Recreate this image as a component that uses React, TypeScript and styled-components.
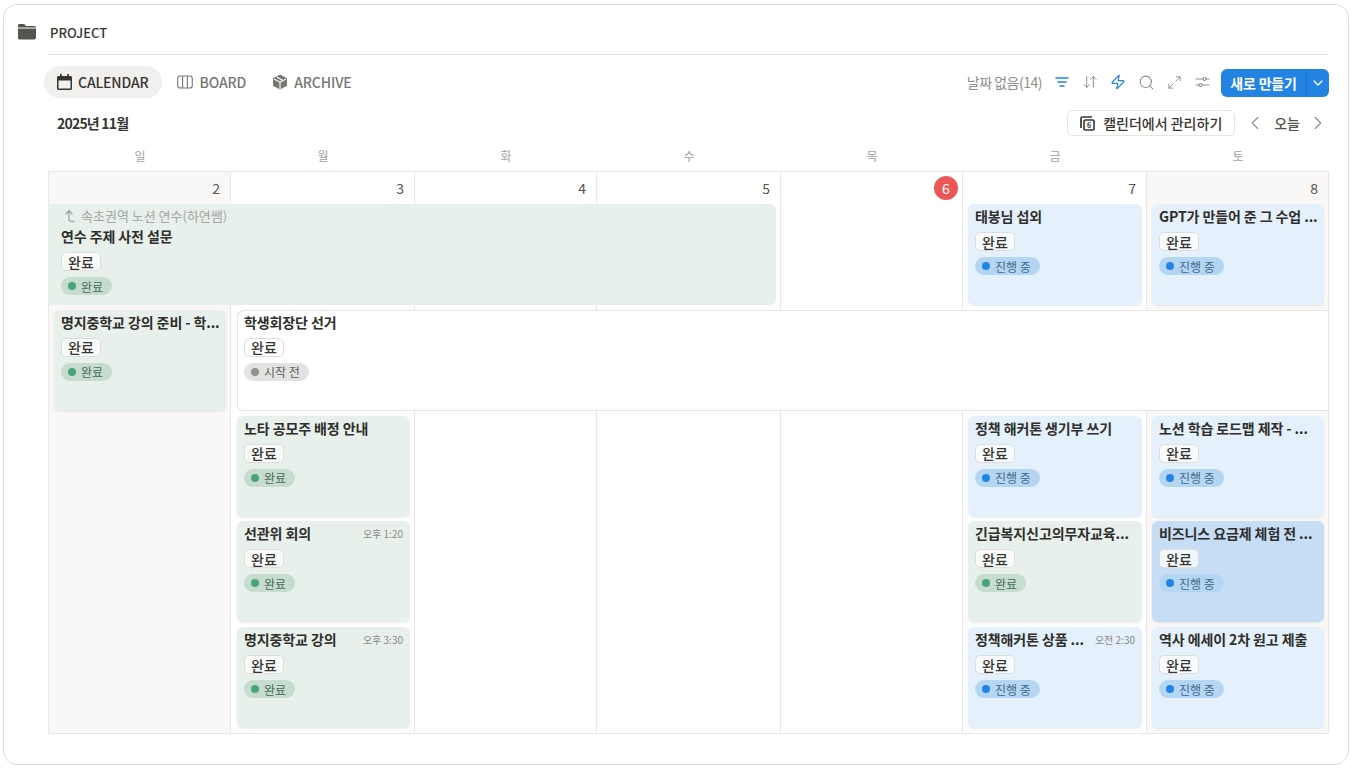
import React from "react";
import styled, { createGlobalStyle } from "styled-components";
import { Search, ChevronDown, ChevronLeft, ChevronRight, ArrowDownUp, Zap, Maximize2 } from "lucide-react";

const Global = createGlobalStyle`
  html, body { margin: 0; padding: 0; background: #fff; }
  body { font-family: "Noto Sans CJK KR", "Noto Sans", sans-serif; color: #37352f; width: 1352px; height: 768px; overflow: hidden; }
  * { box-sizing: border-box; }
`;
const Page = styled.div`
  width: 1352px; height: 768px; padding: 4px 3px 3px 3px;
`;
const Frame = styled.div`
  height: 761px; border: 1px solid #dcdcdc; border-radius: 14px; padding: 14px 19px 0 14px;
  display: flex; flex-direction: column;
`;
const TitleRow = styled.div`display:flex; align-items:center; height: 28px; padding-bottom:2px; margin-bottom: 7px;`;
const FolderBox = styled.div`width:32px; display:flex; align-items:center;`;
const Title = styled.div`font-size:13px; font-weight:500; color:#37352f;`;
const Body = styled.div`margin-left:30px; flex:1; display:flex; flex-direction:column;`;
const Rule = styled.div`height:1px; background:#e4e3e1;`;
const Toolbar = styled.div`display:flex; align-items:center; justify-content:space-between; margin:11px 0 0 -4px; height:32px;`;
const Tabs = styled.div`display:flex; align-items:center; gap:2px;`;
const Tab = styled.div<{ $active?: boolean; $gap: number }>`
  height:32px; border-radius:16px; padding:${p => p.$active ? "0 13px" : "0 11px 0 13px"}; display:flex; align-items:center; gap:${p => p.$gap}px;
  font-size:14px; font-weight:500; letter-spacing:-.15px;
  background:${p => p.$active ? "#f1f0ee" : "transparent"};
  color:${p => p.$active ? "#37352f" : "#787774"};
`;
const Tools = styled.div`display:flex; align-items:center;`;
const NoDate = styled.span`font-size:14px; color:#8f8d89; margin-right:6px; letter-spacing:-.5px;`;
const ToolIcon = styled.span<{ $c?: string }>`
  width:28px; height:24px; display:flex; align-items:center; justify-content:center; color:${p => p.$c || "#91908c"};
`;
const NewBtn = styled.div`
  margin-left:5px; margin-top:2px; height:28px; width:108px; border-radius:6px; background:#2383e2; color:#fff; display:flex; align-items:center;
  font-size:14px; font-weight:600;
`;
const NewLabel = styled.span`flex:1; text-align:center; letter-spacing:-.2px;`;
const NewCaret = styled.span`width:23px; height:100%; border-left:1px solid #1b73cb; padding-right:1px; display:flex; align-items:center; justify-content:center;`;
const MonthRow = styled.div`display:flex; align-items:center; justify-content:space-between; height:26px; margin-top:12px;`;
const Month = styled.div`font-size:14px; font-weight:600; margin-left:9px; letter-spacing:-.8px;`;
const MonthRight = styled.div`display:flex; align-items:center;`;
const ManageBtn = styled.div`
  height:26px; width:168px; border:1px solid #e6e5e3; border-radius:6px; display:flex; align-items:center; justify-content:center; gap:8px;
  font-size:14px; font-weight:500;
`;
const NavLeft = styled.span`display:flex; align-items:center; color:#8f8e8a; margin-left:9px;`;
const NavRight = styled.span`display:flex; align-items:center; color:#8f8e8a;`;
const Today = styled.span`font-size:14px; color:#55534e; margin:0 7px 0 8px; font-weight:500;`;
const Weekdays = styled.div`
  display:grid; grid-template-columns:182px 184px 182px 184px 182px 184px 182px; height:31px; align-items:center; margin-top:4px; padding-left:1px;
`;
const Weekday = styled.div`font-size:12px; color:#a4a3a0; text-align:center;`;
const Grid = styled.div`
  display:grid; grid-template-columns:182px 184px 182px 184px 182px 184px 182px;
  grid-template-rows:32px repeat(5, 105.75px); width:1281px;
  border-top:1px solid #e9e8e6; border-bottom:1px solid #e9e8e6; border-left:1px solid #e9e8e6;
`;
const Cell = styled.div<{ $col: number; $weekend?: boolean }>`
  grid-column:${p => p.$col}; grid-row:1 / -1;
  background:${p => p.$weekend ? "#f9f8f7" : "#fff"};
  border-right:1px solid #e9e8e6;
`;
const DayNum = styled.div<{ $col: number }>`
  grid-column:${p => p.$col}; grid-row:1; font-size:14px; color:#55534e; display:flex; justify-content:flex-end; align-items:center; padding-right:11px; z-index:1;
`;
const TodayDot = styled.span`
  display:inline-flex; width:24px; height:24px; border-radius:50%; background:#eb5757; color:#fff; align-items:center; justify-content:center;
  font-size:14px; margin-right:-6px;
`;
const Card = styled.div<{ $bg: string; $kind?: "open" | "cont"; $c: number; $e?: number; $r: number }>`
  grid-column:${p => p.$c} / span ${p => p.$e || 1}; grid-row:${p => p.$r};
  margin:${p => p.$kind === "open" ? "0 5px 4.75px -1px" : p.$kind === "cont" ? "0 1px 4.75px 6px" : p.$c === 2 ? "0 5px 4.75px 6px" : "0 5px 4.75px 5px"};
  background:${p => p.$bg};
  border-radius:${p => p.$kind === "open" ? "0 6px 6px 0" : p.$kind === "cont" ? "6px 0 0 6px" : "6px"};
  box-shadow:${p => p.$kind === "open" ? "none" : p.$kind === "cont" ? "inset 1px 1px 0 #e6e5e3, inset 0 -1px 0 #e6e5e3" : "0 1px 2px rgba(15,15,15,.08)"};
  padding:4.5px 7px 0 ${p => p.$kind === "open" ? 13 : 7}px; min-width:0; z-index:2; position:relative;
`;
const Linked = styled.div`display:flex; align-items:center; gap:4px; font-size:13px; color:#a3a7a3; height:15px; margin:-.5px 0 5.5px 3px;`;
const CardTitleRow = styled.div`display:flex; align-items:center; height:17px; padding-bottom:2px; gap:8px;`;
const CardTitle = styled.div`font-size:14px; font-weight:600; color:#2f2e2b; white-space:nowrap; flex:1; min-width:0; letter-spacing:-.1px;`;
const Time = styled.div`font-size:10px; color:#8b8a86; white-space:nowrap;`;
const Tag = styled.div`
  display:flex; width:fit-content; height:19px; margin-top:6.5px; padding:0 6px; align-items:center; background:rgba(255,255,255,.75); border:1px solid #dedddb; border-radius:5px; font-size:14px; font-weight:500; color:#37352f;
`;
const Pill = styled.div<{ $bg: string; $c: string }>`
  display:flex; width:fit-content; height:18px; margin-top:6px; border-radius:9px; align-items:center; gap:5px; padding:0 9px 0 7px; background:${p => p.$bg}; font-size:12px; color:${p => p.$c};
`;
const Dot = styled.span<{ $c: string }>`width:8px; height:8px; border-radius:50%; background:${p => p.$c};`;

const green = "#e8f0eb", blue = "#e4f0fb", blueDark = "#c6ddf5";
const S = {
  done: { bg: "#c5dccf", dot: "#4aa478", c: "#45695a", label: "완료" },
  prog: { bg: "#b5d6f3", dot: "#2383e2", c: "#3f6a8c", label: "진행 중" },
  todo: { bg: "#e3e2e0", dot: "#91918e", c: "#5f5e5b", label: "시작 전" },
};
type Ev = { t: string; s: keyof typeof S; c: number; r: number; e?: number; bg: string; time?: string; kind?: "open" | "cont"; linked?: string };
const events: Ev[] = [
  { t: "연수 주제 사전 설문", s: "done", c: 1, e: 4, r: 2, bg: green, kind: "open", linked: "속초권역 노션 연수(하연쌤)" },
  { t: "태봉님 섭외", s: "prog", c: 6, r: 2, bg: blue },
  { t: "GPT가 만들어 준 그 수업 ...", s: "prog", c: 7, r: 2, bg: blue },
  { t: "명지중학교 강의 준비 - 학...", s: "done", c: 1, r: 3, bg: green },
  { t: "학생회장단 선거", s: "todo", c: 2, e: 6, r: 3, bg: "#fff", kind: "cont" },
  { t: "노타 공모주 배정 안내", s: "done", c: 2, r: 4, bg: green },
  { t: "정책 해커톤 생기부 쓰기", s: "prog", c: 6, r: 4, bg: blue },
  { t: "노션 학습 로드맵 제작 - ...", s: "prog", c: 7, r: 4, bg: blue },
  { t: "선관위 회의", s: "done", c: 2, r: 5, bg: green, time: "오후 1:20" },
  { t: "긴급복지신고의무자교육...", s: "done", c: 6, r: 5, bg: green },
  { t: "비즈니스 요금제 체험 전 ...", s: "prog", c: 7, r: 5, bg: blueDark },
  { t: "명지중학교 강의", s: "done", c: 2, r: 6, bg: green, time: "오후 3:30" },
  { t: "정책해커톤 상품 ...", s: "prog", c: 6, r: 6, bg: blue, time: "오전 2:30" },
  { t: "역사 에세이 2차 원고 제출", s: "prog", c: 7, r: 6, bg: blue },
];

const FolderIcon = () => (
  <svg width="18" height="16" viewBox="0 0 18 16" fill="#55534e">
    <path d="M0 1.3C0 .6.6 0 1.3 0h4.3c.5 0 .9.2 1.2.6L8 2h8.7c.7 0 1.3.6 1.3 1.4H0z" />
    <path d="M0 4.6h18v9.2c0 1-.8 1.8-1.8 1.8H1.8C.8 15.6 0 14.8 0 13.8z" />
  </svg>
);
const CalIcon = () => (
  <svg width="15" height="16" viewBox="0 0 15 16" fill="#37352f">
    <path fillRule="evenodd" d="M3 0h1.7v2h5.6V0H12v2h1.5c.8 0 1.5.7 1.5 1.5v11c0 .8-.7 1.5-1.5 1.5h-12C.7 16 0 15.3 0 14.5v-11C0 2.7.7 2 1.5 2H3zM1.5 6.5v8h12v-8z" />
  </svg>
);
const BoardIcon = () => (
  <svg width="16" height="14" viewBox="0 0 16 14" fill="none" stroke="#787774" strokeWidth="1.1">
    <rect x=".7" y="1" width="14.6" height="12" rx="2.6" />
    <path d="M5.6 1v12M10.4 1v12" />
  </svg>
);
const CubeIcon = () => (
  <svg width="16" height="16" viewBox="0 0 16 16">
    <path d="M8 .5l7 3.7v7.6l-7 3.7-7-3.7V4.2z" fill="#787774" />
    <path d="M2 5l6 3.2L14 5M8 8.2V15M4.7 3l6.3 3.4" fill="none" stroke="#fff" strokeWidth="1.1" />
  </svg>
);
const FilterIcon = () => (
  <svg width="14" height="14" viewBox="0 0 14 14" fill="none" stroke="#2383e2" strokeWidth="1.5" strokeLinecap="round">
    <path d="M1 3h12M3 7h8M5 11h4" />
  </svg>
);
const SlidersIcon = () => (
  <svg width="15" height="14" viewBox="0 0 15 14" fill="none" stroke="#91908c" strokeWidth="1.2" strokeLinecap="round">
    <path d="M1 4h7M11 4h3M1 10h3M7 10h7" /><circle cx="9.5" cy="4" r="1.5" /><circle cx="5.5" cy="10" r="1.5" />
  </svg>
);
const GCal = () => (
  <svg width="15" height="15" viewBox="0 0 15 15" fill="none" stroke="#37352f">
    <path d="M1 12V2.5C1 1.7 1.7 1 2.5 1H12" strokeWidth="1.7" />
    <rect x="4" y="4" width="10" height="10" rx="1.2" strokeWidth="1.6" />
    <text x="9" y="12" fontSize="7" fontWeight="600" textAnchor="middle" fill="#37352f" stroke="none">6</text>
  </svg>
);
const HookArrow = () => (
  <svg width="13" height="14" viewBox="0 0 13 14" fill="none" stroke="#a3a7a3" strokeWidth="1.3" strokeLinecap="round" strokeLinejoin="round">
    <path d="M2 5l3-3.5L8 5M5 1.5V10c0 1.5 1 2.5 3 2.5h2" />
  </svg>
);
const days = ["일", "월", "화", "수", "목", "금", "토"];
const nums = [2, 3, 4, 5, 6, 7, 8];

export default function App() {
  return (
    <Page>
      <Global />
      <Frame>
        <TitleRow><FolderBox><FolderIcon /></FolderBox><Title>PROJECT</Title></TitleRow>
        <Body>
          <Rule />
          <Toolbar>
            <Tabs>
              <Tab $active $gap={6}><CalIcon />CALENDAR</Tab>
              <Tab $gap={7}><BoardIcon />BOARD</Tab>
              <Tab $gap={6}><CubeIcon />ARCHIVE</Tab>
            </Tabs>
            <Tools>
              <NoDate>날짜 없음(14)</NoDate>
              <ToolIcon><FilterIcon /></ToolIcon>
              <ToolIcon><ArrowDownUp size={16} strokeWidth={1.5} /></ToolIcon>
              <ToolIcon $c="#2383e2"><Zap size={16} strokeWidth={1.7} /></ToolIcon>
              <ToolIcon><Search size={17} strokeWidth={1.5} /></ToolIcon>
              <ToolIcon><Maximize2 size={15} strokeWidth={1.5} /></ToolIcon>
              <ToolIcon><SlidersIcon /></ToolIcon>
              <NewBtn><NewLabel>새로 만들기</NewLabel><NewCaret><ChevronDown size={16} strokeWidth={2} /></NewCaret></NewBtn>
            </Tools>
          </Toolbar>
          <MonthRow>
            <Month>2025년 11월</Month>
            <MonthRight>
              <ManageBtn><GCal />캘린더에서 관리하기</ManageBtn>
              <NavLeft><ChevronLeft size={22} strokeWidth={1.3} /></NavLeft>
              <Today>오늘</Today>
              <NavRight><ChevronRight size={22} strokeWidth={1.3} /></NavRight>
            </MonthRight>
          </MonthRow>
          <Weekdays>{days.map(d => <Weekday key={d}>{d}</Weekday>)}</Weekdays>
          <Grid>
            {nums.map((n, i) => <Cell key={n} $col={i + 1} $weekend={i === 0 || i === 6} />)}
            {nums.map((n, i) => <DayNum key={n} $col={i + 1}>{n === 6 ? <TodayDot>6</TodayDot> : n}</DayNum>)}
            {events.map(ev => {
              const st = S[ev.s];
              return (
                <Card key={ev.t} $bg={ev.bg} $c={ev.c} $e={ev.e} $r={ev.r} $kind={ev.kind}>
                  {ev.linked && <Linked><HookArrow />{ev.linked}</Linked>}
                  <CardTitleRow><CardTitle>{ev.t}</CardTitle>{ev.time && <Time>{ev.time}</Time>}</CardTitleRow>
                  <Tag>완료</Tag>
                  <Pill $bg={st.bg} $c={st.c}><Dot $c={st.dot} />{st.label}</Pill>
                </Card>
              );
            })}
          </Grid>
        </Body>
      </Frame>
    </Page>
  );
}
